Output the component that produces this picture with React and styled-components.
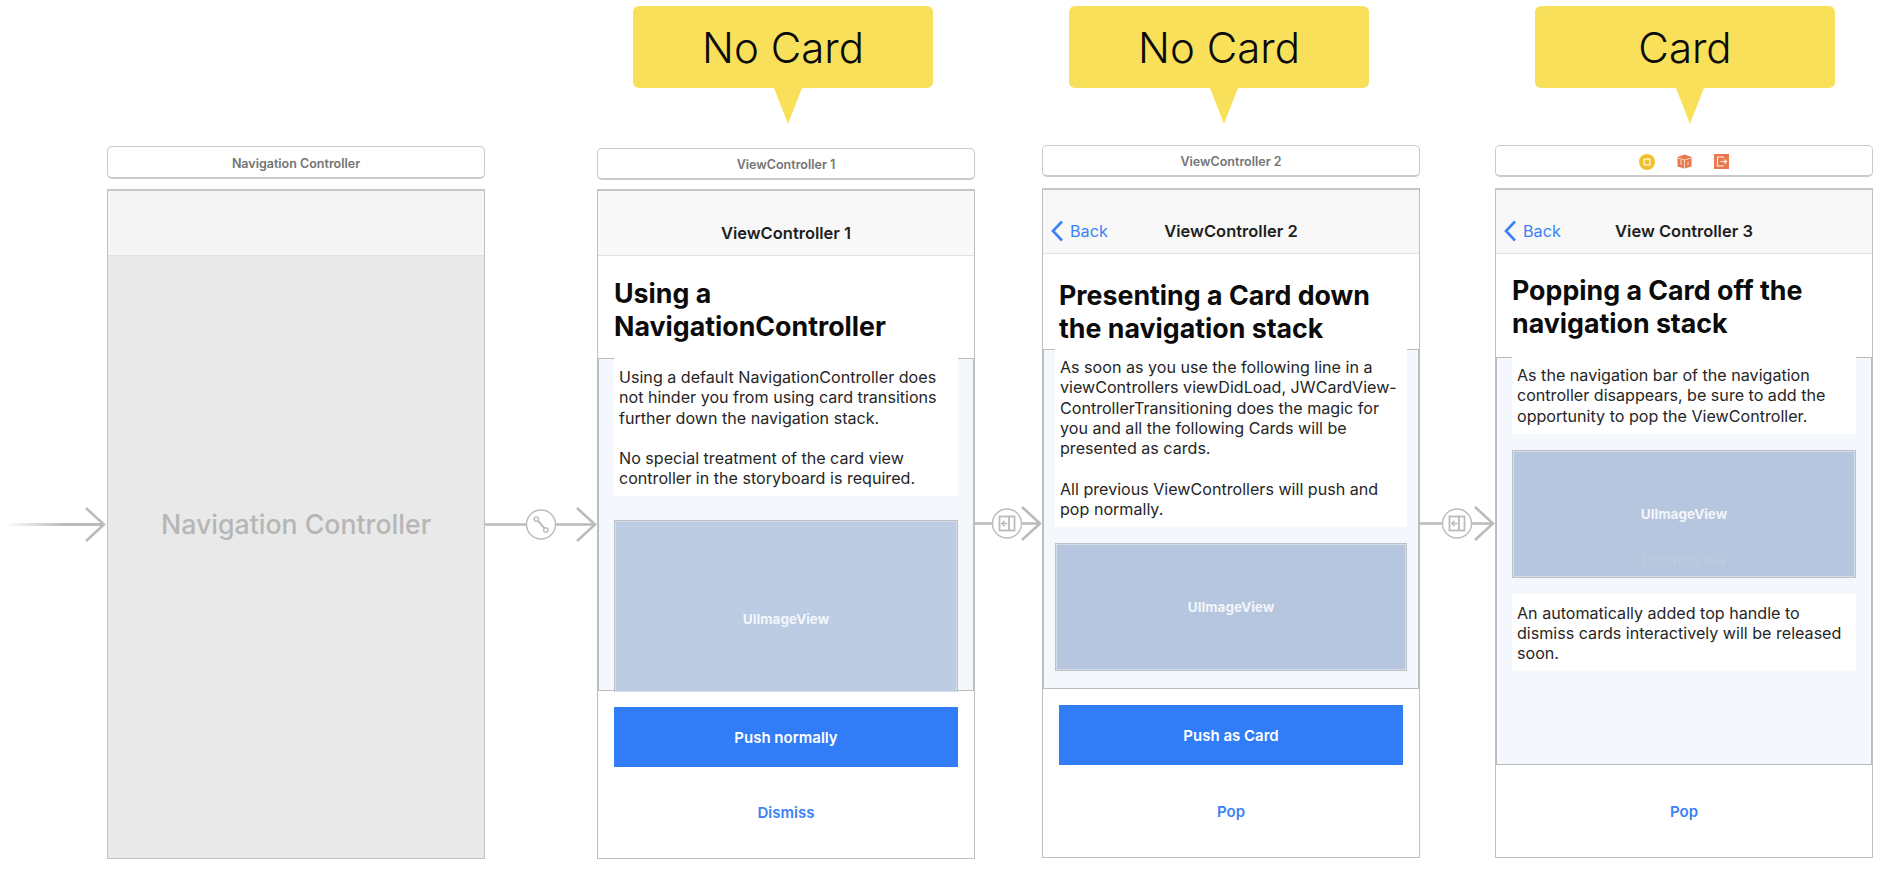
import styled, { createGlobalStyle } from 'styled-components'

const GlobalStyle = createGlobalStyle`
  html, body {
    margin: 0;
    padding: 0;
    background: #fff;
  }
  body {
    font-family: Inter, "Liberation Sans", sans-serif;
    overflow: hidden;
  }
`

const Board = styled.div`
  display: flex;
  align-items: flex-start;
  width: 1882px;
  height: 870px;
`

const Column = styled.div`
  position: relative;
  display: flex;
  flex-direction: column;
  flex: none;
  width: 378px;
  margin-top: ${(p) => p.$top}px;
`

const TitleBar = styled.div`
  box-sizing: border-box;
  display: flex;
  align-items: center;
  justify-content: center;
  gap: 22px;
  height: ${(p) => p.$height}px;
  margin-bottom: ${(p) => p.$gap}px;
  padding-top: 2px;
  background: #fff;
  border: 1px solid #cacaca;
  border-bottom-width: 2px;
  border-radius: 5px;
  font-size: 12.5px;
  font-weight: 600;
  color: #747474;
`

const Scene = styled.div`
  box-sizing: border-box;
  display: flex;
  flex-direction: column;
  height: ${(p) => p.$height}px;
  background: #fff;
  border: 1px solid #bfbfbf;
  border-top: 2px solid #c6c6c6;
`

const NavBar = styled.div`
  box-sizing: border-box;
  flex: none;
  display: grid;
  grid-template-columns: 1fr auto 1fr;
  align-items: center;
  height: ${(p) => p.$height}px;
  padding-top: ${(p) => p.$height - 46}px;
  background: ${(p) => p.$bg || '#f8f8f8'};
  border-bottom: 1px solid #e2e2e2;
`

const NavTitle = styled.div`
  grid-column: 2;
  font-size: 16.5px;
  font-weight: 600;
  color: #1f1f1f;
  white-space: nowrap;
`

const BackLink = styled.div`
  grid-column: 1;
  display: flex;
  align-items: center;
  gap: 6px;
  padding-left: 8px;
  font-size: 16.2px;
  color: #3a82f6;
`

const Header = styled.div`
  box-sizing: border-box;
  flex: none;
  height: ${(p) => p.$height}px;
  padding: ${(p) => p.$top}px 0 0 ${(p) => p.$left}px;
`

const Heading = styled.h1`
  margin: 0;
  font-size: 26.75px;
  line-height: 33px;
  font-weight: 700;
  color: #0b0b0b;
  white-space: nowrap;
`

const ScrollArea = styled.div`
  box-sizing: border-box;
  flex: none;
  display: flex;
  flex-direction: column;
  height: ${(p) => p.$height}px;
  padding: 0 ${(p) => p.$inset}px;
  background: #f4f7fb;
  border: 1px solid #bcbcbc;
`

const TextBlock = styled.p`
  margin: ${(p) => p.$top}px 0 ${(p) => p.$bottom}px;
  padding: ${(p) => (p.$tight ? '8px 5px 8px' : '9px 5px 7px')};
  background: #fff;
  font-size: 16.1px;
  line-height: 20.3px;
  color: #262626;
  white-space: nowrap;
`

const ImageView = styled.div`
  box-sizing: border-box;
  position: relative;
  z-index: 1;
  flex: none;
  display: flex;
  align-items: center;
  justify-content: center;
  height: ${(p) => p.$height}px;
  margin-bottom: ${(p) => (p.$cut ? -1 : 0)}px;
  padding-top: ${(p) => (p.$cut ? 26 : 0)}px;
  background: ${(p) => p.$bg};
  border: 1px solid #bcbfc4;
  border-bottom-width: ${(p) => (p.$cut ? 0 : 1)}px;
  box-shadow: inset 0 0 0 1px #d6dde8;
  font-size: 13.5px;
  font-weight: 700;
  color: rgba(255, 255, 255, 0.85);
`

const GhostLabel = styled.span`
  position: absolute;
  left: 0;
  right: 0;
  top: 102px;
  text-align: center;
  color: rgba(255, 255, 255, 0.1);
`

const Footer = styled.div`
  flex: 1;
  display: flex;
  flex-direction: column;
  min-height: 0;
  padding: 0 ${(p) => p.$inset}px;
`

const PushButton = styled.div`
  flex: none;
  display: flex;
  align-items: center;
  justify-content: center;
  height: 60px;
  margin-top: 16px;
  background: #317cf7;
  font-size: 15px;
  font-weight: 600;
  color: #fff;
`

const LinkArea = styled.div`
  flex: 1;
  display: flex;
  align-items: center;
  justify-content: center;
  font-size: 15px;
  font-weight: 600;
  color: #3a82f6;
`

const ControllerBody = styled.div`
  flex: 1;
  display: flex;
  align-items: center;
  justify-content: center;
  padding-bottom: 67px;
  background: #e9e9e9;
  font-size: 26.7px;
  font-weight: 500;
  color: #b6b6b6;
`

const Bubble = styled.div`
  position: absolute;
  top: ${(p) => p.$top}px;
  left: ${(p) => p.$left}px;
  display: flex;
  align-items: center;
  justify-content: center;
  width: 300px;
  height: 82px;
  background: #f9e05a;
  border-radius: 6px;
  font-size: 42px;
  font-weight: 300;
  color: #0a0a0a;
  &::after {
    content: '';
    position: absolute;
    top: 82px;
    left: ${(p) => p.$tip - 14}px;
    border-style: solid;
    border-width: 36px 14px 0;
    border-color: #f9e05a transparent transparent;
  }
`

const ConnectorBox = styled.svg`
  flex: none;
  display: block;
  margin-top: ${(p) => p.$top}px;
`

function ArrowHead({ tip }) {
  return <path d={`M${tip - 18} 1 L${tip} 17.5 L${tip - 18} 34`} fill="none" stroke="#bbb" strokeWidth="2.6" />
}

function SegueLink() {
  // circle with the two little nodes
  return (
    <g fill="none" stroke="#bbb" strokeWidth="1.4">
      <circle cx="0" cy="0" r="14.5" />
      <circle cx="-4.6" cy="-5.4" r="2.2" />
      <circle cx="4.8" cy="5.4" r="2.2" />
      <path d="M-3 -3.6 L3.3 3.6" strokeWidth="2" />
    </g>
  )
}

function SeguePresent() {
  return (
    <g fill="none" stroke="#bbb" strokeWidth="1.4">
      <circle cx="0" cy="0" r="14.5" />
      <rect x="-7.5" y="-7" width="15" height="14" strokeWidth="1.8" />
      <path d="M2 -7 V7" strokeWidth="1.8" />
      <path d="M0.5 0 H-5 M-2.4 -2.8 L-5 0 L-2.4 2.8" strokeWidth="1.6" />
    </g>
  )
}

function EntryArrow() {
  return (
    <ConnectorBox $top={507} width="107" height="35" viewBox="0 0 107 35">
      <defs>
        <linearGradient id="entryFade" x1="0" x2="1" y1="0" y2="0">
          <stop offset="0" stopColor="#bbb" stopOpacity="0" />
          <stop offset="0.6" stopColor="#bbb" />
        </linearGradient>
      </defs>
      <rect x="5" y="16" width="99" height="3" fill="url(#entryFade)" />
      <ArrowHead tip={104} />
    </ConnectorBox>
  )
}

function Connector({ width, top, circleAt, children }) {
  const tip = width - 2
  return (
    <ConnectorBox $top={top} width={width} height="35" viewBox={`0 0 ${width} 35`}>
      <path d={`M0 17.5 H${circleAt - 14.5} M${circleAt + 14.5} 17.5 H${tip}`} stroke="#bbb" strokeWidth="2.6" />
      <ArrowHead tip={tip} />
      <g transform={`translate(${circleAt} 17.5)`}>{children}</g>
    </ConnectorBox>
  )
}

function ChevronBack() {
  return (
    <svg width="13" height="22" viewBox="0 0 13 22">
      <path d="M11 1.5 L2 11 L11 20.5" fill="none" stroke="#3a82f6" strokeWidth="2.6" />
    </svg>
  )
}

function SceneDockIcons() {
  return (
    <>
      <svg width="16" height="16" viewBox="0 0 16 16">
        <circle cx="8" cy="8" r="8" fill="#f0c02f" />
        <rect x="4.2" y="4.2" width="7.6" height="7.6" rx="1" fill="#fbe9ae" />
        <rect x="6" y="6" width="4" height="4" fill="#f0c02f" />
      </svg>
      <svg width="15" height="15" viewBox="0 0 15 15">
        <path d="M7.5 0.5 L14.5 3 V12.5 L7.5 14.5 L0.5 12.5 V3 Z" fill="#e9784c" />
        <path d="M1 4 L7.5 6 L14 4 M7.5 6 V14 M4 6 V11 M11 8 V11" fill="none" stroke="#fbe3d8" strokeWidth="0.9" />
      </svg>
      <svg width="15" height="15" viewBox="0 0 15 15">
        <rect width="15" height="15" fill="#e9784c" />
        <path d="M9 4 V3 H3.5 V12 H9 V11 M6.5 7.5 H12.5 M10.5 5.5 L12.5 7.5 L10.5 9.5" fill="none" stroke="#fdeee7" strokeWidth="1.2" />
      </svg>
    </>
  )
}

export default function App() {
  return (
    <>
      <GlobalStyle />
      <Board>
        <EntryArrow />

        <Column $top={146}>
          <TitleBar $height={33} $gap={10}>Navigation Controller</TitleBar>
          <Scene $height={670}>
            <NavBar $height={65} $bg="#f5f5f5" />
            <ControllerBody>Navigation Controller</ControllerBody>
          </Scene>
        </Column>

        <Connector width={112} top={507} circleAt={56}>
          <SegueLink />
        </Connector>

        <Column $top={148}>
          <Bubble $top={-142} $left={36} $tip={155}>No Card</Bubble>
          <TitleBar $height={32} $gap={9}>ViewController 1</TitleBar>
          <Scene $height={670}>
            <NavBar $height={65}>
              <NavTitle>ViewController 1</NavTitle>
            </NavBar>
            <Header $height={102} $top={21} $left={16}>
              <Heading>Using a<br />NavigationController</Heading>
            </Header>
            <ScrollArea $height={333} $inset={15}>
              <TextBlock $top={-1} $bottom={24}>
                Using a default NavigationController does<br />
                not hinder you from using card transitions<br />
                further down the navigation stack.<br />
                <br />
                No special treatment of the card view<br />
                controller in the storyboard is required.
              </TextBlock>
              <ImageView $height={172} $bg="#bccce2" $cut>UIImageView</ImageView>
            </ScrollArea>
            <Footer $inset={16}>
              <PushButton>Push normally</PushButton>
              <LinkArea>Dismiss</LinkArea>
            </Footer>
          </Scene>
        </Column>

        <Connector width={67} top={506} circleAt={32}>
          <SeguePresent />
        </Connector>

        <Column $top={145}>
          <Bubble $top={-139} $left={27} $tip={155}>No Card</Bubble>
          <TitleBar $height={32} $gap={11}>ViewController 2</TitleBar>
          <Scene $height={670}>
            <NavBar $height={64}>
              <BackLink><ChevronBack />Back</BackLink>
              <NavTitle>ViewController 2</NavTitle>
            </NavBar>
            <Header $height={95} $top={25} $left={16}>
              <Heading>Presenting a Card down<br />the navigation stack</Heading>
            </Header>
            <ScrollArea $height={340} $inset={11}>
              <TextBlock $tight $top={-1} $bottom={16}>
                As soon as you use the following line in a<br />
                viewControllers viewDidLoad, JWCardView-<br />
                ControllerTransitioning does the magic for<br />
                you and all the following Cards will be<br />
                presented as cards.<br />
                <br />
                All previous ViewControllers will push and<br />
                pop normally.
              </TextBlock>
              <ImageView $height={128} $bg="#b5c6de">UIImageView</ImageView>
            </ScrollArea>
            <Footer $inset={16}>
              <PushButton>Push as Card</PushButton>
              <LinkArea>Pop</LinkArea>
            </Footer>
          </Scene>
        </Column>

        <Connector width={75} top={506} circleAt={37}>
          <SeguePresent />
        </Connector>

        <Column $top={145}>
          <Bubble $top={-139} $left={40} $tip={155}>Card</Bubble>
          <TitleBar $height={32} $gap={11}><SceneDockIcons /></TitleBar>
          <Scene $height={670}>
            <NavBar $height={64}>
              <BackLink><ChevronBack />Back</BackLink>
              <NavTitle>View Controller 3</NavTitle>
            </NavBar>
            <Header $height={103} $top={20} $left={16}>
              <Heading>Popping a Card off the<br />navigation stack</Heading>
            </Header>
            <ScrollArea $height={408} $inset={15}>
              <TextBlock $tight $top={-1} $bottom={16}>
                As the navigation bar of the navigation<br />
                controller disappears, be sure to add the<br />
                opportunity to pop the ViewController.
              </TextBlock>
              <ImageView $height={128} $bg="#b5c6de">
                UIImageView
                <GhostLabel>UIScrollView</GhostLabel>
              </ImageView>
              <TextBlock $top={16} $bottom={0}>
                An automatically added top handle to<br />
                dismiss cards interactively will be released<br />
                soon.
              </TextBlock>
            </ScrollArea>
            <Footer $inset={16}>
              <LinkArea>Pop</LinkArea>
            </Footer>
          </Scene>
        </Column>
      </Board>
    </>
  )
}
